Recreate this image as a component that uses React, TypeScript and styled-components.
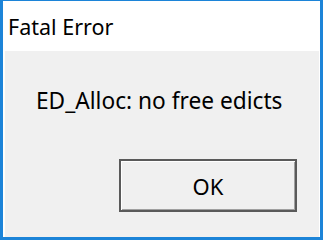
import React from "react";
import styled, { createGlobalStyle } from "styled-components";

const Global = createGlobalStyle`
  html, body { margin: 0; padding: 0; background: #ffffff; }
  #root { width: 323px; height: 240px; }
`;

const Window = styled.div`
  box-sizing: border-box;
  width: 323px;
  height: 240px;
  border-style: solid;
  border-color: #1c84d8;
  border-width: 1px 3px 3px 3px;
  background: #ffffff;
  display: flex;
  flex-direction: column;
  font-family: "Noto Sans", "Open Sans", sans-serif;
`;

const TitleBar = styled.div`
  height: 50px;
  flex: none;
  display: flex;
  align-items: center;
  padding-left: 5px;
  font-size: 21.5px;
  color: #000;
`;

const Body = styled.div`
  flex: 1;
  background: #f0f0f0;
  margin: 0 1px 0 1px;
  border-left: 1px solid #fffff8;
  display: flex;
  flex-direction: column;
  padding: 35px 0 0 31px;
`;

const Message = styled.div`
  font-size: 22.7px;
  line-height: 30px;
  color: #000;
`;

const ButtonRow = styled.div`
  display: flex;
  justify-content: flex-end;
  padding-right: 22px;
  margin-top: 43px;
`;

const OkButton = styled.button`
  box-sizing: border-box;
  width: 178px;
  height: 53px;
  background: #f0f0f0;
  border: 2px solid #5a5a5a;
  box-shadow: inset 1px 1px 0 #ffffff, inset -1px -1px 0 #a0a0a0;
  font-family: inherit;
  font-size: 22px;
  color: #000;
  padding: 0;
`;

export default function App() {
  return (
    <>
      <Global />
      <Window>
        <TitleBar>Fatal Error</TitleBar>
        <Body>
          <Message>ED_Alloc: no free edicts</Message>
          <ButtonRow>
            <OkButton>OK</OkButton>
          </ButtonRow>
        </Body>
      </Window>
    </>
  );
}
